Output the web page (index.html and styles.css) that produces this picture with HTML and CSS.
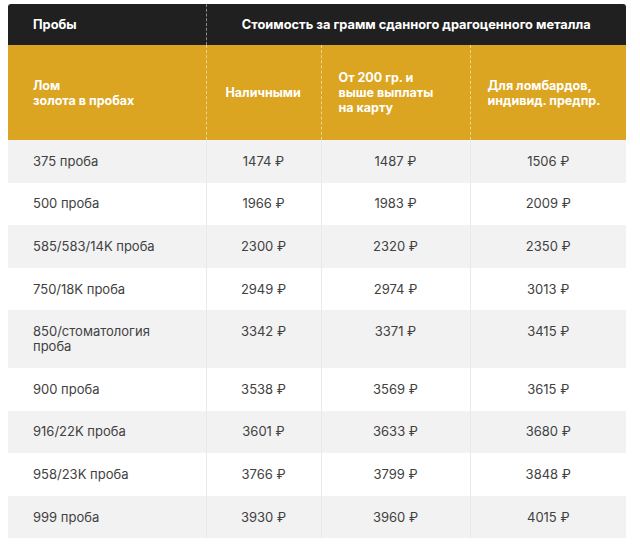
FILE: index.html
```html
<!DOCTYPE html>
<html lang="ru">
<head>
<meta charset="utf-8">
<title>Пробы</title>
<link rel="stylesheet" href="styles.css">
</head>
<body>
<div class="wrap">
<table class="price">
  <colgroup>
    <col class="c1"><col class="c2"><col class="c3"><col class="c4">
  </colgroup>
  <thead>
    <tr class="top">
      <th class="first">Пробы</th>
      <th colspan="3" class="span">Стоимость за грамм сданного драгоценного металла</th>
    </tr>
    <tr class="gold">
      <th class="first">Лом<br>золота в пробах</th>
      <th>Наличными</th>
      <th>От 200 гр. и<br>выше выплаты<br>на карту</th>
      <th>Для ломбардов,<br>индивид. предпр.</th>
    </tr>
  </thead>
  <tbody>
    <tr><td>375 проба</td><td>1474 ₽</td><td>1487 ₽</td><td>1506 ₽</td></tr>
    <tr><td>500 проба</td><td>1966 ₽</td><td>1983 ₽</td><td>2009 ₽</td></tr>
    <tr><td>585/583/14K проба</td><td>2300 ₽</td><td>2320 ₽</td><td>2350 ₽</td></tr>
    <tr><td>750/18K проба</td><td>2949 ₽</td><td>2974 ₽</td><td>3013 ₽</td></tr>
    <tr><td>850/стоматология<br>проба</td><td>3342 ₽</td><td>3371 ₽</td><td>3415 ₽</td></tr>
    <tr><td>900 проба</td><td>3538 ₽</td><td>3569 ₽</td><td>3615 ₽</td></tr>
    <tr><td>916/22K проба</td><td>3601 ₽</td><td>3633 ₽</td><td>3680 ₽</td></tr>
    <tr><td>958/23K проба</td><td>3766 ₽</td><td>3799 ₽</td><td>3848 ₽</td></tr>
    <tr><td>999 проба</td><td>3930 ₽</td><td>3960 ₽</td><td>4015 ₽</td></tr>
  </tbody>
</table>
</div>
</body>
</html>
```
FILE: styles.css
```css
html, body {
  margin: 0;
  padding: 0;
  background: #ffffff;
}
body {
  padding: 4px 0 0 8px;
  font-family: Inter, "Noto Sans", sans-serif;
}
.wrap {
  width: 618px;
  border-radius: 3px 3px 0 0;
  overflow: hidden;
}
.price {
  width: 618px;
  border-collapse: collapse;
  table-layout: fixed;
  font-size: 13px;
}
.c1 { width: 198px; }
.c2 { width: 115px; }
.c3 { width: 149px; }
.c4 { width: 156px; }

.top th {
  background: #202020;
  color: #ffffff;
  font-weight: 700;
  font-size: 12.8px;
  height: 41px;
  padding: 0;
  line-height: 16px;
  vertical-align: middle;
}
.top .first {
  text-align: left;
  padding-left: 25px;
  border-right: 1px dashed #8a8a8a;
}
.top .span {
  text-align: center;
}

.gold th {
  background: #dba521;
  color: #ffffff;
  font-weight: 700;
  font-size: 12.5px;
  height: 95px;
  padding: 0 10px 0 17px;
  line-height: 15px;
  text-align: left;
  vertical-align: middle;
  border-left: 1px dashed #f0d48a;
}
.gold th:nth-child(2) {
  padding-left: 19px;
}
.gold .first {
  padding-left: 25px;
  border-left: none;
}

tbody td {
  padding: 13.8px 0 13.8px 0;
  line-height: 15px;
  color: #414141;
  text-align: center;
  vertical-align: top;
  border-left: 1px solid #e9e9eb;
}
tbody td:first-child {
  text-align: left;
  padding-left: 25px;
  border-left: none;
}
tbody tr:nth-child(odd) td {
  background: #f2f2f3;
}
tbody tr:nth-child(even) td {
  background: #ffffff;
}
```
